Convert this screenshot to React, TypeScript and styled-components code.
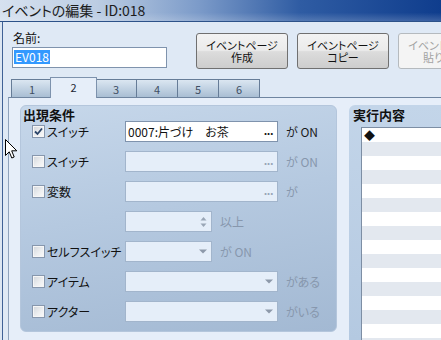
import React from "react";
import styled, { createGlobalStyle, css } from "styled-components";

const Global = createGlobalStyle`
  html, body { margin: 0; padding: 0; background: #dfe9f5; }
  body {
    font-family: "Noto Sans CJK JP", "Noto Sans", sans-serif;
    font-size: 12px;
    color: #111;
    font-feature-settings: "palt";
  }
  * { box-sizing: border-box; }
`;

const Window = styled.div`
  position: relative;
  width: 441px;
  height: 340px;
  overflow: hidden;
  display: flex;
  flex-direction: column;
  background: #dce6f2;
`;

const TitleBar = styled.div`
  height: 22px;
  flex-shrink: 0;
  background:
    linear-gradient(to bottom, rgba(255,255,255,0) 60%, rgba(255,255,255,0.18) 100%),
    linear-gradient(to right, #d6e1ef 0%, #bccde3 22%, #7c9bc9 45%, #2f5ca3 68%, #0f3d8d 100%);
  border-bottom: 1px solid #2d5289;
  font-size: 14px;
  line-height: 21px;
  padding-left: 2px;
  color: #1c1c1c;
  white-space: nowrap;
`;

const Body = styled.div`
  flex: 1;
  min-height: 0;
  display: flex;
  flex-direction: column;
  margin-left: 2px;
  border-left: 1px solid #3f6196;
  background: #dfe9f5;
`;

const TopRow = styled.div`
  display: flex;
  align-items: flex-start;
  height: 55px;
  flex-shrink: 0;
  padding: 9px 0 0 9px;
`;

const NameField = styled.div`
  display: flex;
  flex-direction: column;
  width: 155px;
  flex-shrink: 0;
`;

const NameLabel = styled.div`
  line-height: 14px;
  height: 14px;
  padding-left: 1px;
`;

const NameInput = styled.div`
  margin-top: 2px;
  height: 21px;
  background: #fff;
  border: 1px solid #7f93ad;
  padding: 2px 0 0 1px;
  display: flex;
  align-items: flex-start;
`;

const Selected = styled.span`
  background: #3399ff;
  color: #fff;
  line-height: 14px;
  padding: 0 1px;
`;

const ButtonGroup = styled.div`
  display: flex;
  gap: 9px;
  margin: 2px 0 0 29px;
  flex-shrink: 0;
`;

const Button = styled.div<{ $disabled?: boolean }>`
  width: 92px;
  height: 36px;
  flex-shrink: 0;
  border-radius: 3px;
  display: flex;
  flex-direction: column;
  align-items: center;
  justify-content: center;
  line-height: 12px;
  font-size: 11px;
  white-space: nowrap;
  ${(p) =>
    p.$disabled
      ? css`
          border: 1px solid #b5babe;
          background: #f4f4f4;
          color: #a3a3a3;
        `
      : css`
          border: 1px solid #707070;
          background: linear-gradient(#f3f3f3 0%, #ebebeb 48%, #dcdcdc 52%, #cdcdcd 100%);
          color: #111;
        `}
`;

const TabStrip = styled.div`
  display: flex;
  align-items: flex-end;
  height: 20px;
  margin-left: 8px;
  flex-shrink: 0;
  position: relative;
  z-index: 1;
`;

const Tab = styled.div<{ $active?: boolean }>`
  width: 42px;
  height: 18px;
  display: flex;
  align-items: center;
  justify-content: center;
  font-size: 11px;
  color: #3e4e63;
  border: 1px solid #667c97;
  border-bottom: none;
  margin-right: -1px;
  background: linear-gradient(#dbe6f1 0%, #c4d4e4 45%, #a9bed3 100%);
  ${(p) =>
    p.$active &&
    css`
      width: 47px;
      height: 21px;
      margin: 0 -2px -1px -2px;
      position: relative;
      z-index: 2;
      color: #1d2733;
      background: #e6eef9;
      border-color: #7d92ad;
      padding-bottom: 2px;
    `}
`;

const TabPanel = styled.div`
  flex: 1;
  min-height: 0;
  display: flex;
  align-items: stretch;
  margin-left: 5px;
  border-left: 1px solid #8fa3bc;
  border-top: 1px solid #6f85a0;
  background: #e6eef9;
  padding: 7px 0 0 11px;
`;

const GroupBox = styled.div`
  width: 317px;
  height: 227px;
  flex-shrink: 0;
  border-radius: 6px;
  background: linear-gradient(170deg, #c6d7ea 0%, #b5c9e0 45%, #a3b9d3 100%);
  border: 1px solid #b4c6dc;
  padding-top: 2px;
`;

const GroupTitle = styled.div`
  font-weight: bold;
  font-size: 13px;
  line-height: 14px;
  height: 14px;
  padding-left: 2px;
  color: #111;
`;

const Rows = styled.div`
  display: flex;
  flex-direction: column;
  gap: 9px;
  margin-top: -1px;
  padding-left: 11px;
`;

const Row = styled.div`
  display: flex;
  align-items: center;
  height: 21px;
`;

const CheckCell = styled.div`
  width: 93px;
  flex-shrink: 0;
  display: flex;
  align-items: center;
  gap: 2px;
  white-space: nowrap;
`;

const Box = styled.div`
  width: 13px;
  height: 13px;
  border: 1px solid #8797ad;
  background: linear-gradient(135deg, #d2d6db 0%, #eceef0 55%, #fbfbfb 100%);
  box-shadow: inset 0 0 0 1px #f6f6f6;
  display: flex;
  align-items: center;
  justify-content: center;
`;

const Label = styled.span`
  line-height: 14px;
`;

const Field = styled.div<{ $w: number; $enabled?: boolean }>`
  width: ${(p) => p.$w}px;
  flex-shrink: 0;
  height: 21px;
  display: flex;
  align-items: center;
  justify-content: space-between;
  padding: 0 4px 0 2px;
  white-space: nowrap;
  overflow: hidden;
  ${(p) =>
    p.$enabled
      ? css`
          background: #fff;
          border: 1px solid #7f93ad;
          color: #111;
        `
      : css`
          background: #e5eef9;
          border: 1px solid #a2b5cc;
          color: #8a99ad;
        `}
`;

const Dots = styled.span<{ $enabled?: boolean }>`
  font-weight: bold;
  font-size: 11px;
  letter-spacing: -0.5px;
  line-height: 10px;
  padding-bottom: 3px;
  color: ${(p) => (p.$enabled ? "#111" : "#97a4b5")};
`;

const Suffix = styled.span<{ $active?: boolean }>`
  margin-left: 8px;
  white-space: nowrap;
  line-height: 14px;
  color: ${(p) => (p.$active ? "#1a1a1a" : "#8797ad")};
`;

const RightGroup = styled.div`
  margin-left: 12px;
  width: 130px;
  flex-shrink: 0;
  border-radius: 6px 0 0 0;
  background: linear-gradient(to bottom, #c3d5e9 0%, #b4c9e1 100%);
  padding: 3px 0 0 0;
  display: flex;
  flex-direction: column;
`;

const RightTitle = styled.div`
  font-weight: bold;
  font-size: 13px;
  line-height: 14px;
  height: 14px;
  padding-left: 4px;
`;

const List = styled.div`
  margin: 5px 0 0 12px;
  flex: 1;
  border-left: 1px solid #7d8ea4;
  border-top: 1px solid #7d8ea4;
  background: #fff;
  display: flex;
  flex-direction: column;
`;

const ListRow = styled.div<{ $alt?: boolean }>`
  height: 14px;
  flex-shrink: 0;
  line-height: 14px;
  padding-left: 2px;
  font-size: 11px;
  background: ${(p) => (p.$alt ? "#e3e8ef" : "#fff")};
`;

const Cursor = styled.svg`
  position: absolute;
  left: 5px;
  top: 139px;
  z-index: 10;
`;

const Arrow = ({ spin }: { spin?: boolean }) =>
  spin ? (
    <svg width="7" height="12" viewBox="0 0 7 12">
      <path d="M3.5 1 L6.5 4.5 L0.5 4.5 Z" fill="#9aa6b6" />
      <path d="M3.5 11 L6.5 7.5 L0.5 7.5 Z" fill="#9aa6b6" />
    </svg>
  ) : (
    <svg width="8" height="5" viewBox="0 0 8 5">
      <path d="M0 0.5 L8 0.5 L4 4.5 Z" fill="#8d99aa" />
    </svg>
  );

type RowDef = {
  label?: string;
  checked?: boolean;
  kind: "text" | "spin" | "combo";
  w: number;
  enabled?: boolean;
  value?: string;
  suffix: string;
  active?: boolean;
};

const rows: RowDef[] = [
  { label: "スイッチ", checked: true, kind: "text", w: 153, enabled: true, value: "0007:片づけ　お茶", suffix: "が ON", active: true },
  { label: "スイッチ", kind: "text", w: 153, suffix: "が ON" },
  { label: "変数", kind: "text", w: 153, suffix: "が" },
  { kind: "spin", w: 87, suffix: "以上" },
  { label: "セルフスイッチ", kind: "combo", w: 87, suffix: "が ON" },
  { label: "アイテム", kind: "combo", w: 153, suffix: "がある" },
  { label: "アクター", kind: "combo", w: 153, suffix: "がいる" },
];

export default function App() {
  return (
    <>
      <Global />
      <Window>
        <TitleBar>イベントの編集 - ID:018</TitleBar>
        <Body>
          <TopRow>
            <NameField>
              <NameLabel>名前:</NameLabel>
              <NameInput>
                <Selected>EV018</Selected>
              </NameInput>
            </NameField>
            <ButtonGroup>
              <Button>
                <span>イベントページ</span>
                <span>作成</span>
              </Button>
              <Button>
                <span>イベントページ</span>
                <span>コピー</span>
              </Button>
              <Button $disabled>
                <span>イベントページ</span>
                <span>貼り付け</span>
              </Button>
            </ButtonGroup>
          </TopRow>
          <TabStrip>
            {["1", "2", "3", "4", "5", "6"].map((t) => (
              <Tab key={t} $active={t === "2"}>
                {t}
              </Tab>
            ))}
          </TabStrip>
          <TabPanel>
            <GroupBox>
              <GroupTitle>出現条件</GroupTitle>
              <Rows>
                {rows.map((r, i) => (
                  <Row key={i}>
                    <CheckCell>
                      {r.label && (
                        <>
                          <Box>
                            {r.checked && (
                              <svg width="9" height="9" viewBox="0 0 9 9">
                                <path d="M1 4.5 L3.5 7 L8 1.5" fill="none" stroke="#2a4468" strokeWidth="1.8" />
                              </svg>
                            )}
                          </Box>
                          <Label>{r.label}</Label>
                        </>
                      )}
                    </CheckCell>
                    <Field $w={r.w} $enabled={r.enabled}>
                      <span>{r.value ?? ""}</span>
                      {r.kind === "text" && <Dots $enabled={r.enabled}>...</Dots>}
                      {r.kind === "spin" && <Arrow spin />}
                      {r.kind === "combo" && <Arrow />}
                    </Field>
                    <Suffix $active={r.active}>{r.suffix}</Suffix>
                  </Row>
                ))}
              </Rows>
            </GroupBox>
            <RightGroup>
              <RightTitle>実行内容</RightTitle>
              <List>
                {Array.from({ length: 16 }).map((_, i) => (
                  <ListRow key={i} $alt={i % 2 === 1}>
                    {i === 0 ? "◆" : ""}
                  </ListRow>
                ))}
              </List>
            </RightGroup>
          </TabPanel>
        </Body>
        <Cursor width="13" height="21" viewBox="0 0 13 21">
          <path d="M0.5 0.5 L0.5 16.5 L4.2 12.8 L6.8 19 L9.2 18 L6.7 11.8 L11.8 11.8 Z" fill="#fff" stroke="#000" strokeWidth="1" strokeLinejoin="miter" />
        </Cursor>
      </Window>
    </>
  );
}
